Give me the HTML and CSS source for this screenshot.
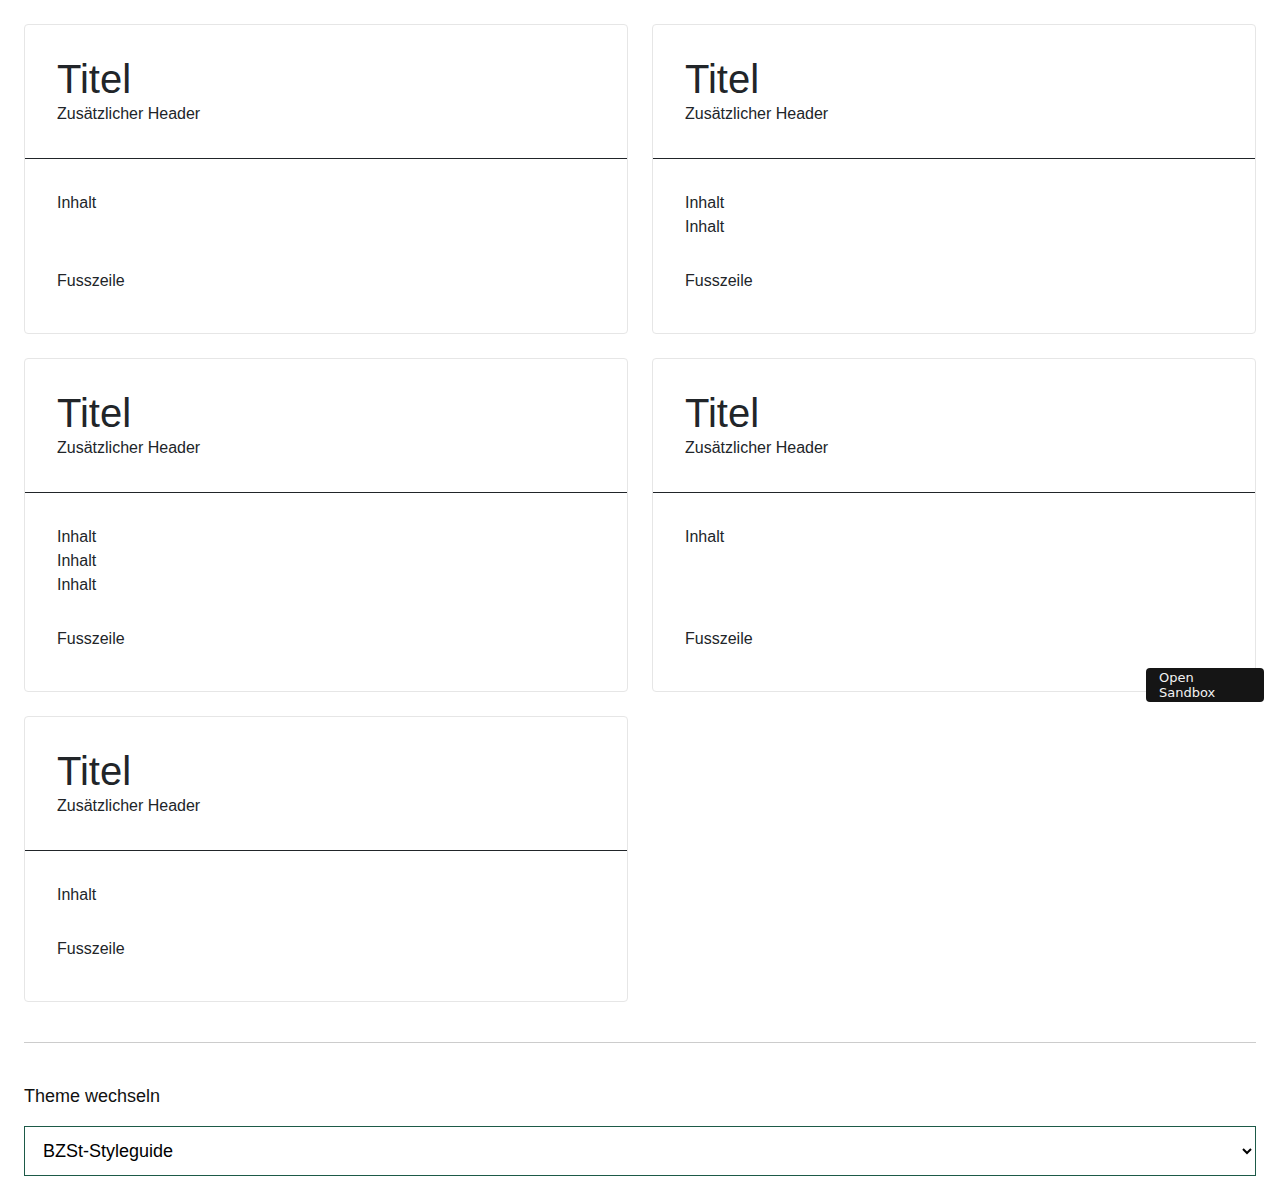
FILE: index.html
```html
<!DOCTYPE html>
<html lang="de">
<head>
<meta charset="utf-8">
<title>Cards</title>
<link rel="stylesheet" href="styles.css">
</head>
<body>
<main class="page">
  <div class="grid">
    <article class="card">
      <header class="card-header"><h2 class="card-title">Titel</h2><div class="card-sub">Zusätzlicher Header</div></header>
      <div class="card-body"><div>Inhalt</div></div>
      <footer class="card-footer">Fusszeile</footer>
    </article>
    <article class="card">
      <header class="card-header"><h2 class="card-title">Titel</h2><div class="card-sub">Zusätzlicher Header</div></header>
      <div class="card-body"><div>Inhalt</div><div>Inhalt</div></div>
      <footer class="card-footer">Fusszeile</footer>
    </article>
    <article class="card">
      <header class="card-header"><h2 class="card-title">Titel</h2><div class="card-sub">Zusätzlicher Header</div></header>
      <div class="card-body"><div>Inhalt</div><div>Inhalt</div><div>Inhalt</div></div>
      <footer class="card-footer">Fusszeile</footer>
    </article>
    <article class="card">
      <header class="card-header"><h2 class="card-title">Titel</h2><div class="card-sub">Zusätzlicher Header</div></header>
      <div class="card-body"><div>Inhalt</div></div>
      <footer class="card-footer">Fusszeile</footer>
    </article>
    <article class="card">
      <header class="card-header"><h2 class="card-title">Titel</h2><div class="card-sub">Zusätzlicher Header</div></header>
      <div class="card-body"><div>Inhalt</div></div>
      <footer class="card-footer">Fusszeile</footer>
    </article>
  </div>
  <hr class="divider">
  <label class="theme-label" for="theme">Theme wechseln</label>
  <select class="theme-select" id="theme">
    <option>BZSt-Styleguide</option>
  </select>
</main>
<button class="sandbox-btn" type="button">Open Sandbox</button>
</body>
</html>
```
FILE: styles.css
```css
html, body {
  margin: 0;
  padding: 0;
  background: #ffffff;
}
body {
  font-family: "Liberation Sans", Arial, sans-serif;
  color: #212529;
}
.page {
  padding: 24px;
}
.grid {
  display: grid;
  grid-template-columns: 1fr 1fr;
  gap: 24px;
}
.card {
  display: flex;
  flex-direction: column;
  border: 1px solid #e6e6e6;
  border-radius: 4px;
  background: #fff;
}
.card-header {
  padding: 32px;
  border-bottom: 1px solid #212529;
}
.card-title {
  margin: 0;
  font-size: 40px;
  line-height: 45px;
  font-weight: 400;
}
.card-sub {
  font-size: 16px;
  line-height: 24px;
}
.card-body {
  flex: 1;
  padding: 32px 32px 30px;
  font-size: 16px;
  line-height: 24px;
}
.card-footer {
  padding: 0 32px 40px;
  font-size: 16px;
  line-height: 24px;
}
.divider {
  margin: 40px 0 40px;
  border: 0;
  border-top: 1px solid #cccccc;
  height: 0;
}
.theme-label {
  display: block;
  font-size: 18px;
  line-height: 27px;
  color: #111;
  margin-bottom: 16px;
}
.theme-select {
  display: block;
  width: 100%;
  height: 50px;
  box-sizing: border-box;
  border: 1px solid #1d5a48;
  border-radius: 0;
  background: #fff;
  color: #000;
  font-family: "Liberation Sans", Arial, sans-serif;
  font-size: 18px;
  padding: 0 14px;
}
.sandbox-btn {
  position: fixed;
  left: 1146px;
  top: 668px;
  width: 118px;
  height: 34px;
  box-sizing: border-box;
  padding: 2px 13px;
  background: #151515;
  color: #f2f2f2;
  border: 0;
  border-radius: 4px;
  font-family: "DejaVu Sans", sans-serif;
  font-size: 13px;
  line-height: 15px;
  text-align: left;
}
```
